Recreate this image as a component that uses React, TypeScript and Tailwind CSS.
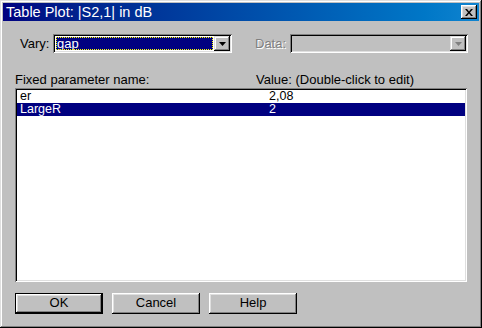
import React from "react";

const font = { fontFamily: '"Liberation Sans", Arial, sans-serif' };

const Arrow = ({ disabled }: { disabled?: boolean }) => (
  <svg width="7" height="4" viewBox="0 0 7 4">
    <path d="M0 0h7L3.5 4z" fill={disabled ? "#808080" : "#000"} />
  </svg>
);

const DropButton = ({ disabled }: { disabled?: boolean }) => (
  <div className="w-[16px] h-full bg-[#c0c0c0] flex items-center justify-center shadow-[inset_-1px_-1px_0_#000,inset_1px_1px_0_#dfdfdf,inset_-2px_-2px_0_#808080,inset_2px_2px_0_#fff]">
    <Arrow disabled={disabled} />
  </div>
);

const Sunken = ({ className, children }: { className?: string; children?: React.ReactNode }) => (
  <div
    className={
      "p-[2px] shadow-[inset_1px_1px_0_#808080,inset_-1px_-1px_0_#fff,inset_2px_2px_0_#000,inset_-2px_-2px_0_#dfdfdf] " +
      (className ?? "")
    }
  >
    {children}
  </div>
);

const Btn = ({ label, def }: { label: string; def?: boolean }) => (
  <div
    className={
      "w-[88px] h-[21px] flex items-center justify-center text-[13px] text-black bg-[#c0c0c0] " +
      (def
        ? "border border-black shadow-[inset_-1px_-1px_0_#000,inset_1px_1px_0_#fff,inset_-2px_-2px_0_#808080,inset_2px_2px_0_#dfdfdf]"
        : "shadow-[inset_-1px_-1px_0_#000,inset_1px_1px_0_#fff,inset_-2px_-2px_0_#808080,inset_2px_2px_0_#dfdfdf]")
    }
  >
    {label}
  </div>
);

export default function App() {
  return (
    <div
      style={font}
      className="w-[482px] h-[328px] bg-[#c0c0c0] p-[3px] flex flex-col shadow-[inset_-1px_-1px_0_#000,inset_1px_1px_0_#dfdfdf,inset_-2px_-2px_0_#808080,inset_2px_2px_0_#fff]"
    >
      {/* title bar */}
      <div className="h-[18px] flex items-center justify-between pl-[3px] pr-[2px] bg-gradient-to-r from-[#000080] to-[#1084d0]">
        <span className="text-white text-[14.5px] leading-none">Table Plot: |S2,1| in dB</span>
        <div className="w-[16px] h-[14px] bg-[#c0c0c0] flex items-center justify-center shadow-[inset_-1px_-1px_0_#000,inset_1px_1px_0_#fff,inset_-2px_-2px_0_#808080,inset_2px_2px_0_#dfdfdf]">
          <svg width="8" height="7" viewBox="0 0 8 7">
            <path d="M0 0h2l2 2.5L6 0h2L5 3.5 8 7H6L4 4.5 2 7H0l3-3.5z" fill="#000" />
          </svg>
        </div>
      </div>

      {/* vary / data row */}
      <div className="flex items-center mt-[13px] pl-[17px] text-[13px]">
        <span className="w-[33px]">Vary:</span>
        <Sunken className="w-[179px] h-[19px] bg-white flex">
          <div className="flex-1 m-[1px] flex items-center bg-[#000080] text-white pl-[1px] outline-1 outline-dotted outline-[#ffff00] -outline-offset-1">
            <span className="leading-[13px]">gap</span>
          </div>
          <DropButton />
        </Sunken>
        <span className="ml-[23px] w-[35px] text-[#808080] [text-shadow:1px_1px_0_#fff]">Data:</span>
        <Sunken className="w-[178px] h-[19px] bg-[#c0c0c0] flex justify-end">
          <DropButton disabled />
        </Sunken>
      </div>

      {/* list */}
      <div className="flex-1 flex flex-col px-[12px] mt-[18px] text-[13px]">
        <div className="flex h-[15px] leading-[15px]">
          <span className="w-[241px]">Fixed parameter name:</span>
          <span>Value: (Double-click to edit)</span>
        </div>
        <Sunken className="mt-[1px] h-[194px] bg-white">
          <div className="flex h-[13px] leading-[13px] text-[12.5px] pl-[3px] text-black">
            <span className="w-[249px]">er</span>
            <span>2,08</span>
          </div>
          <div className="flex h-[13px] leading-[13px] text-[12.5px] pl-[3px] bg-[#000080] text-white">
            <span className="w-[249px]">LargeR</span>
            <span>2</span>
          </div>
        </Sunken>
        <div className="flex gap-[9px] mt-[11px]">
          <Btn label="OK" def />
          <Btn label="Cancel" />
          <Btn label="Help" />
        </div>
      </div>
    </div>
  );
}
